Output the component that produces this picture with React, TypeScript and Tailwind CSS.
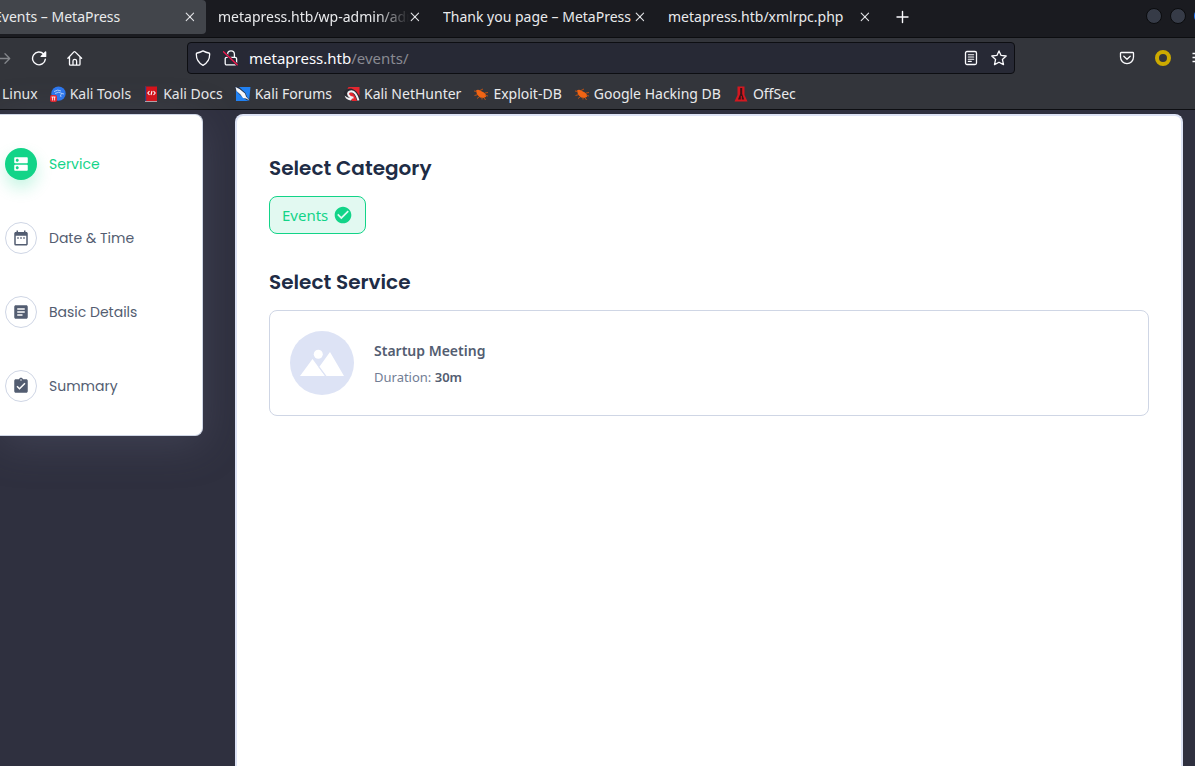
import type { ReactNode } from 'react';
import { MdDns, MdDateRange, MdArticle, MdAssignmentTurnedIn, MdCheckCircle } from 'react-icons/md';

const tabs = [
  { title: 'metapress.htb/wp-admin/admin-ajax.php', faded: true },
  { title: 'Thank you page – MetaPress', faded: false },
  { title: 'metapress.htb/xmlrpc.php', faded: false },
];

function CloseButton({ label }: { label: string }) {
  return (
    <button aria-label={label} className="flex size-3 shrink-0 items-center justify-center text-[#e2e3e6]">
      <svg viewBox="0 0 12 12" className="size-3" fill="none" stroke="currentColor" strokeWidth="1.1" strokeLinecap="round">
        <path d="M2.2 2.2l7.4 7.4M9.6 2.2L2.2 9.6" />
      </svg>
    </button>
  );
}

function TabStrip() {
  return (
    <div className="flex h-[38px] items-start border-b border-[#0c0d10] bg-[#1a1b20]">
      <div className="flex h-[34px] w-[206px] shrink-0 items-center justify-between overflow-hidden rounded-r bg-[#42454b] pr-[10px]">
        <button className="-ml-[6px] whitespace-nowrap">Events – MetaPress</button>
        <CloseButton label="Close Events" />
      </div>
      {tabs.map(({ title, faded }) => (
        <div key={title} className="flex h-[34px] w-[225px] shrink-0 items-center pr-[10px] pl-3">
          <button
            className={
              faded
                ? 'flex-1 overflow-hidden text-left whitespace-nowrap [mask-image:linear-gradient(to_left,transparent,black_32px)]'
                : 'flex-1 overflow-hidden text-left whitespace-nowrap'
            }
          >
            {title}
          </button>
          <CloseButton label={'Close ' + title} />
        </div>
      ))}
      <button aria-label="New tab" className="ml-[13px] flex h-[34px] w-4 items-center justify-center">
        <svg viewBox="0 0 16 16" className="size-4 shrink-0" stroke="#fbfbfe" strokeWidth="1.4" strokeLinecap="round">
          <path d="M8.5 2.500v11M3 8h11" />
        </svg>
      </button>
      <div className="ml-auto flex gap-2 overflow-hidden pt-2">
        <button aria-label="Minimize" className="size-4 rounded-full border border-[#0b0c0e] bg-[#363b47]" />
        <button aria-label="Maximize" className="size-4 rounded-full border border-[#0b0c0e] bg-[#363b47]" />
        <button aria-label="Close window" className="-mr-[15px] size-4 rounded-full bg-[#2277ff]" />
      </div>
    </div>
  );
}

function Toolbar() {
  return (
    <div className="flex h-10 items-center overflow-hidden text-[#fbfbfe]">
      <button aria-label="Forward" className="w-[31px] shrink-0 text-[#84868b]">
        <svg viewBox="0 0 12 16" className="h-4 w-3" fill="none" stroke="currentColor" strokeWidth="1.3" strokeLinecap="round" strokeLinejoin="round">
          <path d="M0 8.5h9.5M5 3.8l4.7 4.7L5 13.2" />
        </svg>
      </button>
      <button aria-label="Reload">
        <svg viewBox="0 0 16 16" className="size-4" fill="none" stroke="currentColor" strokeWidth="1.4" strokeLinecap="round" strokeLinejoin="round">
          <path d="M14.3 9.3A6.4 6.4 0 1 1 12.6 4" />
          <path d="M14.6 2v4.4h-4.4z" fill="currentColor" />
        </svg>
      </button>
      <button aria-label="Home" className="ml-5">
        <svg viewBox="0 0 16 16" className="size-4" fill="none" stroke="currentColor" strokeWidth="1.3" strokeLinecap="round" strokeLinejoin="round">
          <path d="M.9 8.2l6-6.3q.6-.6 1.2 0l6.5 6.3M2.5 7v7.200q0 1 1 1h8.500q1 0 1-1V7M6 15v-4q0-1.600 1.800-1.600T9.600 11v4" />
        </svg>
      </button>
      <div className="mx-[104px] flex h-8 flex-1 items-center rounded border border-[#0d0e12] bg-[#272935] px-[7px]">
        <button aria-label="Site protections">
          <svg viewBox="0 0 16 16" className="size-4" fill="none" stroke="currentColor" strokeWidth="1.3" strokeLinejoin="round">
            <path d="M8 .9q3.2 1.7 5.8 2.1.9.2.9 1.1 0 8-6.7 11.200Q1.300 12.100 1.300 4.100 1.300 3.200 2.200 3 4.800 2.600 8 .9z" />
          </svg>
        </button>
        <button aria-label="Connection is not secure" className="ml-3">
          <svg viewBox="0 0 16 16" className="size-4" fill="none" stroke="currentColor" strokeWidth="1.3" strokeLinecap="round">
            <rect x="2.200" y="7.300" width="11.400" height="7.600" rx="1.500" />
            <path d="M4.600 7V4.200a3.400 3.400 0 0 1 6.800 0V7" />
            <path d="M1 2.400L14.600 15" stroke="#272935" strokeWidth="2.600" />
            <path d="M.5 1.800L14.200 14.800" stroke="#f0194f" strokeWidth="1.400" />
          </svg>
        </button>
        <div className="relative ml-[10px] flex flex-1 items-center text-[15px] leading-6">
          <span aria-hidden="true">metapress.htb<span className="text-[#898a92]">/events/</span></span>
          <input aria-label="Address" defaultValue="metapress.htb/events/" className="absolute inset-0 w-full text-transparent outline-none" />
        </div>
        <button aria-label="Reader view">
          <svg viewBox="0 0 16 16" className="size-4" fill="none" stroke="currentColor" strokeWidth="1.300" strokeLinecap="round">
            <rect x="2.500" y="1.500" width="11" height="13" rx="1.500" />
            <path d="M5.300 4.800h5.400M5.300 7h5.400M5.300 9.200h5.400M5.300 11.400h3" strokeWidth="1.100" />
          </svg>
        </button>
        <button aria-label="Bookmark this page" className="ml-3">
          <svg viewBox="0 0 16 16" className="size-4" fill="none" stroke="currentColor" strokeWidth="1.300" strokeLinejoin="round">
            <path d="M8 .9l2.100 4.500 5.100.6-3.800 3.400 1.100 5.200L8 12.200l-4.500 2.400 1.100-5.200L.8 6l5.100-.6z" />
          </svg>
        </button>
      </div>
      <button aria-label="Save to Pocket">
        <svg viewBox="0 0 16 16" className="size-4" fill="none" stroke="currentColor" strokeWidth="1.300" strokeLinecap="round" strokeLinejoin="round">
          <path d="M2.300 2.500h11.400q.8 0 .8.800v3.800a6.500 6.500 0 0 1-13 0V3.300q0-.8.800-.8zM4.800 6.200L8 9.200l3.200-3" />
        </svg>
      </button>
      <button aria-label="Proxy extension" className="ml-5 size-4 rounded-full border-4 border-[#ccaa00]" />
      <button aria-label="Menu" className="ml-5 w-1">
        <svg viewBox="0 0 4 16" className="h-4 w-1" stroke="currentColor" strokeWidth="1.300">
          <path d="M1.500 3.500H4M1.500 7.500H4M1.500 11.500H4" />
        </svg>
      </button>
    </div>
  );
}

const BugIcon = (
  <svg viewBox="0 0 16 16" className="size-4">
    <path d="M3 4.500Q5 3 7.500 4.800L11 6.500l1.700 1.800.4 2.400-2.500 1.400-3.600-.7-3-2.900z" fill="#f06414" />
    <path d="M1 5l3 .5M1.500 9.500l3-.8M4 12.500l2-1.500M12 7l3-.5M12.500 9.500l2.500.5M11 11.500l1.500 2.500M7 4.500L10 3M9 11.500v2" stroke="#c9530f" strokeWidth=".9" fill="none" />
  </svg>
);

const bookmarks: { label: string; icon: ReactNode }[] = [
  {
    label: 'Kali Tools',
    icon: (
      <svg viewBox="0 0 16 16" className="size-4">
        <circle cx="8.500" cy="7.600" r="7.200" fill="#2d78f0" />
        <path d="M4 5.500Q8 3 11 5M5 7.500Q9 5 12 7.500l2 .5M12 7.500q-2.500 1-1 3.500" stroke="#b9d6ff" strokeWidth=".9" fill="none" />
        <rect y="9" width="7" height="7" rx="2" fill="#e8252f" />
        <path d="M1.500 11h4M2.600 11v3.500M4.600 11v3.500" stroke="#fff" strokeWidth=".9" />
      </svg>
    ),
  },
  {
    label: 'Kali Docs',
    icon: (
      <svg viewBox="0 0 16 16" className="size-4">
        <path d="M2 .5h12v14.500H2z" fill="#d8131b" />
        <path d="M2 .5h1.200v14.500H2z" fill="#253f86" />
        <path d="M2 15h12v1H2z" fill="#b9a5aa" />
        <path d="M6.500 5L4.800 7l1.700 2M10.500 5l1.700 2-1.700 2M9 5L8 9" stroke="#fff" strokeWidth="1.100" fill="none" />
      </svg>
    ),
  },
  {
    label: 'Kali Forums',
    icon: (
      <svg viewBox="0 0 16 16" className="size-4">
        <path d="M1 1h14.500l-1.500 14H1z" fill="#2181f2" />
        <path d="M0 .5l4 .5 6.500 6 1.500 4 3.500 4-3.500-.8-4-2.700-4-3.500-4-5z" fill="#25324a" />
        <path d="M.5 1l4 2 5.500 4.500 1 3 3.500 4-3.500-2-3-.5-2.500-3.500-4-3.500z" fill="#f4f6fa" />
      </svg>
    ),
  },
  {
    label: 'Kali NetHunter',
    icon: (
      <svg viewBox="0 0 16 16" className="size-4">
        <path d="M4.500 1h11v8L13 15H8L2 6z" fill="#e4262f" />
        <path d="M.5 10Q2 4 7.500 4.500q5 1.500 7.500 10.500" fill="none" stroke="#292b32" strokeWidth="3.800" />
        <path d="M14.500 14.500Q12 5.500 7.500 5.200 3 5.500 4.500 9q1.500 3 5 2.500" fill="none" stroke="#f2f3f6" strokeWidth="2" />
        <path d="M.5 9.500q3.500 3.500 8 2l-1.500 3q-5-.5-6.500-5z" fill="#f2f3f6" />
      </svg>
    ),
  },
  { label: 'Exploit-DB', icon: BugIcon },
  { label: 'Google Hacking DB', icon: BugIcon },
  {
    label: 'OffSec',
    icon: (
      <svg viewBox="0 0 16 16" className="size-4">
        <path d="M4.500.5h7v8.500l3 6.500h-13l3-6.500z" fill="#d31820" />
        <path d="M7.200 2h2v6l2 5.500H8.800V10h-1v3.500H5l2.200-5.500z" fill="#3a1216" />
      </svg>
    ),
  },
];

function BookmarksBar() {
  return (
    <nav className="flex h-8 items-center gap-3 overflow-hidden border-b border-[#0d0e12] pl-[2px] whitespace-nowrap">
      <a href="#linux">Linux</a>
      {bookmarks.map((b) => (
        <a key={b.label} href="#bookmark" className="flex items-center gap-1">
          {b.icon}
          {b.label}
        </a>
      ))}
    </nav>
  );
}

const steps = [
  { label: 'Service', Icon: MdDns, active: true },
  { label: 'Date & Time', Icon: MdDateRange, active: false },
  { label: 'Basic Details', Icon: MdArticle, active: false },
  { label: 'Summary', Icon: MdAssignmentTurnedIn, active: false },
];

function Sidebar() {
  return (
    <aside className="flex w-[203px] shrink-0 flex-col gap-[42px] self-start rounded-r-lg border-y border-r border-[#cfd6e5] bg-white py-[33px] pl-[5px] shadow-[0_8px_40px_rgba(90,92,115,0.4)]">
      {steps.map(({ label, Icon, active }) => (
        <button
          key={label}
          className={
            active
              ? "flex items-center gap-3 text-left font-['Poppins','Inter',sans-serif] text-sm text-[#12d488]"
              : "flex items-center gap-3 text-left font-['Poppins','Inter',sans-serif] text-sm text-[#535d71]"
          }
        >
          <span
            className={
              active
                ? 'flex size-8 items-center justify-center rounded-full bg-[#12d488] text-white shadow-[0_8px_16px_rgba(18,212,136,0.24)]'
                : 'flex size-8 items-center justify-center rounded-full border border-[#cfd6e5]'
            }
          >
            <Icon className="size-[18px]" />
          </span>
          {label}
        </button>
      ))}
    </aside>
  );
}

function BookingPanel() {
  return (
    <main className="flex-1 rounded-t-lg border-x-2 border-t-2 border-[#dde3f5] bg-white px-8 pt-[37px]">
      <h2 className="font-['Poppins','Inter',sans-serif] text-xl leading-[30px] font-semibold text-[#202c45]">Select Category</h2>
      <button className="mt-[13px] flex h-[38px] items-center gap-[5px] rounded-lg border border-[#12d488] bg-[#e2f9f1] px-3 text-[15px] leading-6 text-[#12d488]">
        Events
        <MdCheckCircle className="size-5" />
      </button>
      <h2 className="mt-[33px] font-['Poppins','Inter',sans-serif] text-xl leading-[30px] font-semibold text-[#202c45]">Select Service</h2>
      <button className="mt-[13px] flex h-[106px] w-full items-center gap-5 rounded-lg border border-[#cfd6e5] px-5 text-left">
        <svg viewBox="0 0 64 64" className="size-16 shrink-0">
          <circle cx="32" cy="32" r="32" fill="#dde3f5" />
          <g fill="#fff">
            <circle cx="28.300" cy="23.300" r="4.500" />
            <path d="M10 45l12.500-17L35 45z" />
            <path d="M31 33.500L40 21l14 24H36.500l-7-9.500z" />
          </g>
          <path d="M28.500 35.500l7 9.500" stroke="#dde3f5" strokeWidth=".8" />
        </svg>
        <span className="flex flex-col gap-[2px] pt-[2px]">
          <span className="leading-6 font-semibold text-[#535d71]">Startup Meeting</span>
          <span className="text-[13px] leading-6 text-[#727e95]">
            Duration: <b className="font-semibold text-[#535d71]">30m</b>
          </span>
        </span>
      </button>
    </main>
  );
}

export default function App() {
  return (
    <div className="flex min-h-screen flex-col overflow-x-hidden bg-[#2f303f] font-['Noto_Sans',sans-serif] text-sm">
      <header className="bg-[#33353b] text-[#e9eaec]">
        <TabStrip />
        <Toolbar />
        <BookmarksBar />
      </header>
      <div className="flex flex-1 gap-8 pt-1 pr-3">
        <Sidebar />
        <BookingPanel />
      </div>
    </div>
  );
}
